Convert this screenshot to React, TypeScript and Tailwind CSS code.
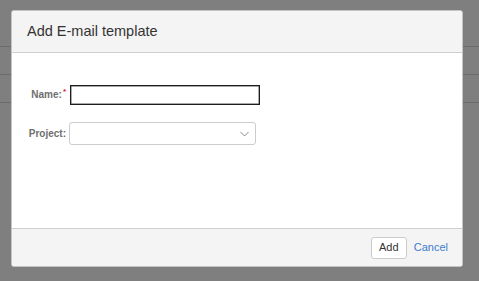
import React from "react";

export default function App() {
  return (
    <div
      className="relative w-[479px] h-[281px] overflow-hidden bg-[#7f7f7f]"
      style={{ fontFamily: '"Liberation Sans", Arial, sans-serif' }}
    >
      {/* underlying page rows behind overlay */}
      <div className="flex flex-col pt-[46px]">
        <div className="h-[28px] border-t border-[#6c6c6c]" />
        <div className="h-[28px] border-t border-[#6c6c6c]" />
        <div className="h-[28px] border-t border-[#6c6c6c]" />
      </div>

      {/* dialog */}
      <div className="absolute left-[11px] top-[10px] w-[452px] h-[257px] flex flex-col bg-white border border-[#c4c4c4] rounded-[3px] overflow-hidden">
        <div className="h-[42px] shrink-0 flex items-center pl-[15px] bg-[#f4f4f4] border-b border-[#cfcfcf]">
          <span className="text-[14.5px] text-[#333333] leading-none">Add E-mail template</span>
        </div>

        <div className="flex-1 flex flex-col pt-[32px] gap-[17px]">
          <div className="flex items-center h-[20px]">
            <div className="w-[54px] text-right text-[10px] font-bold text-[#6e6e6e] leading-none">
              Name:<span className="relative -top-[4px] text-[#e02020] text-[8px] ml-[1px]">*</span>
            </div>
            <div className="ml-[4px] w-[190px] h-[20px] border border-[#1c1c1c] shadow-[inset_0_0_0_0.5px_#555] bg-white" />
          </div>
          <div className="flex items-center h-[23px]">
            <div className="w-[54px] text-right text-[10px] font-bold text-[#6e6e6e] leading-none">
              Project:
            </div>
            <div className="ml-[3px] w-[187px] h-[23px] border border-[#cccccc] rounded-[3px] bg-white flex items-center justify-end pr-[6px]">
              <svg width="9" height="6" viewBox="0 0 9 6" fill="none">
                <path d="M0.5 1 L4.5 5 L8.5 1" stroke="#8a8a8a" strokeWidth="1" />
              </svg>
            </div>
          </div>
        </div>

        <div className="h-[38px] shrink-0 flex items-center justify-end pr-[14px] gap-[7px] bg-[#f4f4f4] border-t border-[#cfcfcf]">
          <button className="h-[22px] w-[36px] border border-[#cccccc] rounded-[3px] bg-white text-[11px] text-[#333333] leading-none">
            Add
          </button>
          <span className="text-[11px] text-[#3e7ccc] leading-none">Cancel</span>
        </div>
      </div>
    </div>
  );
}
